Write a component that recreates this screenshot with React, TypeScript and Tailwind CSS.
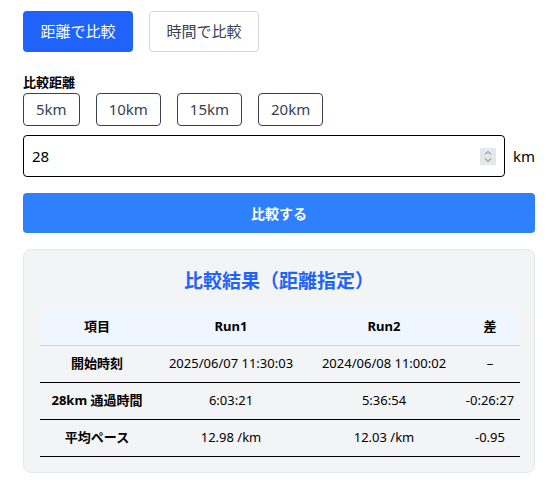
import { useState } from "react";

const presets = ["5km", "10km", "15km", "20km"];

const rows = [
  { label: "開始時刻", a: "2025/06/07 11:30:03", b: "2024/06/08 11:00:02", d: "–" },
  { label: "28km 通過時間", a: "6:03:21", b: "5:36:54", d: "-0:26:27" },
  { label: "平均ペース", a: "12.98 /km", b: "12.03 /km", d: "-0.95" },
];

export default function App() {
  const [mode, setMode] = useState<"distance" | "time">("distance");
  const [dist, setDist] = useState("28");

  return (
    <div
      className="min-h-[493px] bg-white text-[#111827]"
      style={{ fontFamily: '"Noto Sans", "Noto Sans CJK JP", sans-serif' }}
    >
      <div className="ml-[23px] w-[512px] pt-[11px]">
        <div className="flex gap-4">
          <button
            onClick={() => setMode("distance")}
            className={
              mode === "distance"
                ? "h-[41px] w-[110px] rounded bg-[#1f63fb] text-[15px] text-white"
                : "h-[41px] w-[110px] rounded border border-[#d1d5db] bg-white text-[15px] text-[#374151]"
            }
          >
            距離で比較
          </button>
          <button
            onClick={() => setMode("time")}
            className={
              mode === "time"
                ? "h-[41px] w-[110px] rounded bg-[#1f63fb] text-[15px] text-white"
                : "h-[41px] w-[110px] rounded border border-[#d1d5db] bg-white text-[15px] text-[#374151]"
            }
          >
            時間で比較
          </button>
        </div>

        <div className="mt-[21px] text-[13px] font-bold leading-[18px] text-black">比較距離</div>
        <div className="mt-[2px] flex gap-4">
          {presets.map((p) => (
            <button
              key={p}
              onClick={() => setDist(p.replace("km", ""))}
              className="h-[33px] rounded border border-[#374151] px-[12px] text-[15px] text-[#374151]"
            >
              {p}
            </button>
          ))}
        </div>

        <div className="mt-[9px] flex items-center">
          <div className="relative w-[483px]">
            <input
              type="text"
              value={dist}
              onChange={(e) => setDist(e.target.value)}
              className="h-[42px] w-full rounded border border-black bg-white px-[8px] text-[15px] text-black outline-none"
            />
            <div className="absolute right-[9px] top-[13px] flex h-[17px] w-[16px] flex-col items-center justify-center bg-[#e5e7eb]">
              <svg width="8" height="13" viewBox="0 0 8 13" fill="none" stroke="#9ca3af" strokeWidth="1.2">
                <path d="M1 4.5 L4 1.5 L7 4.5" />
                <path d="M1 8.5 L4 11.5 L7 8.5" />
              </svg>
            </div>
          </div>
          <span className="ml-[8px] text-[15px] text-black">km</span>
        </div>

        <button className="mt-[16px] h-[40px] w-full rounded bg-[#2f80fd] text-[14px] font-bold text-white">
          比較する
        </button>

        <div className="mt-[16px] rounded-lg border border-[#e5e7eb] bg-[#f3f4f6] px-4 pb-[15px] pt-[18px]">
          <h2 className="text-center text-[19px] font-bold leading-[26px] text-[#1f63fb]">
            比較結果（距離指定）
          </h2>
          <table className="mt-[15px] w-[480px] table-fixed border-collapse text-[13px] text-black">
            <colgroup>
              <col className="w-[114px]" />
              <col className="w-[154px]" />
              <col className="w-[152px]" />
              <col className="w-[60px]" />
            </colgroup>
            <thead>
              <tr className="h-[36px] border-b border-[#d1d5db] bg-[#eff6ff] font-bold">
                <th>項目</th>
                <th>Run1</th>
                <th>Run2</th>
                <th>差</th>
              </tr>
            </thead>
            <tbody>
              {rows.map((r) => (
                <tr key={r.label} className="h-[37px] border-b border-black text-center">
                  <td className="font-bold">{r.label}</td>
                  <td>{r.a}</td>
                  <td>{r.b}</td>
                  <td>{r.d}</td>
                </tr>
              ))}
            </tbody>
          </table>
        </div>
      </div>
    </div>
  );
}
